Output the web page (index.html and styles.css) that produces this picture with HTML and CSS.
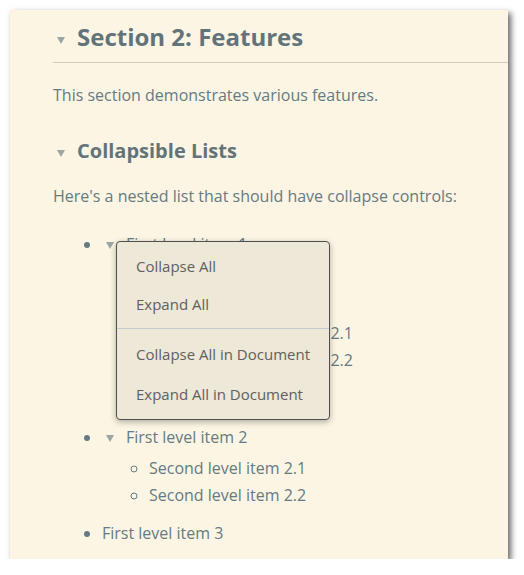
FILE: index.html
```html
<!DOCTYPE html>
<html>
<head>
<meta charset="utf-8">
<link rel="stylesheet" href="styles.css">
</head>
<body>
<div class="window">
  <div class="content">
    <h2 class="h2"><span class="tog"><span class="tri"></span></span>Section 2: Features</h2>
    <p class="para">This section demonstrates various features.</p>
    <h3 class="h3"><span class="tog"><span class="tri"></span></span>Collapsible Lists</h3>
    <p class="para">Here's a nested list that should have collapse controls:</p>
    <ul class="l1">
      <li><span class="tog"><span class="tri"></span></span>First level item 1
        <ul class="l2">
          <li>Second level item 1.1</li>
          <li><span class="tog"><span class="tri"></span></span>Second level item 1.2
            <ul class="l3">
              <li>Third level item 1.2.1</li>
              <li>Third level item 1.2.2</li>
            </ul>
          </li>
          <li>Second level item 1.3</li>
        </ul>
      </li>
      <li><span class="tog"><span class="tri"></span></span>First level item 2
        <ul class="l2">
          <li>Second level item 2.1</li>
          <li>Second level item 2.2</li>
        </ul>
      </li>
      <li>First level item 3</li>
    </ul>
  </div>
  <div class="menu">
    <div class="mi">Collapse All</div>
    <div class="mi">Expand All</div>
    <div class="sep"></div>
    <div class="mi">Collapse All in Document</div>
    <div class="mi mi-last">Expand All in Document</div>
  </div>
</div>
</body>
</html>
```
FILE: styles.css
```css
html, body {
  margin: 0;
  padding: 0;
  background: #ffffff;
}
body {
  font-family: "Open Sans", "Noto Sans", sans-serif;
}
.window {
  position: relative;
  margin: 10px 0 0 10px;
  width: 498px;
  height: 549px;
  background: #fcf5e3;
  box-shadow: 3px 3px 6px rgba(0, 0, 0, 0.6);
  overflow: hidden;
  color: #657b83;
}
.content {
  padding: 10px 0 0 43px;
}
.h2 {
  margin: 0;
  font-size: 24px;
  line-height: 34px;
  font-weight: 700;
  color: #627479;
  border-bottom: 1px solid #cfcdbf;
  padding-bottom: 8px;
  display: flex;
  align-items: center;
}
.h3 {
  margin: 0;
  font-size: 20px;
  line-height: 28px;
  font-weight: 700;
  color: #627479;
  display: flex;
  align-items: center;
  margin-top: 30px;
}
.tog {
  display: inline-flex;
  width: 24px;
  height: 10px;
  align-items: center;
  vertical-align: middle;
}
.tri {
  width: 0;
  height: 0;
  margin-left: 4px;
  border-left: 4px solid transparent;
  border-right: 4px solid transparent;
  border-top: 7px solid #9aa6a4;
}
.h2 .tog { margin-top: 6px; }
.h3 .tog { margin-top: 5px; }
.para {
  margin: 0;
  font-size: 16px;
  line-height: 24px;
}
.h2 + .para { margin-top: 20px; }
.h3 + .para { margin-top: 19px; }
.l1 {
  margin: 23px 0 0 0;
  padding-left: 49px;
  font-size: 16px;
  line-height: 27px;
  list-style: disc;
}
.l1 > li { margin-bottom: 11px; }
.l2 {
  margin: 4px 0 0 0;
  padding-left: 47px;
  list-style: circle;
}
.l3 {
  margin: 4px 0 12px 0;
  padding-left: 49px;
  list-style: square;
}
.menu {
  position: absolute;
  left: 106px;
  top: 231px;
  width: 212px;
  padding: 5px 0 6px 0;
  background: #ede8d7;
  border: 1px solid #4f4f4f;
  border-radius: 4px;
  box-shadow: 0 2px 6px rgba(0, 0, 0, 0.3);
  font-size: 15px;
  color: #5f6060;
}
.mi {
  height: 38px;
  line-height: 38px;
  padding-left: 19px;
}
.mi-last {
  margin-top: 2px;
}
.sep {
  height: 1px;
  background: #c6cbcf;
  margin: 5px 0 6px 0;
}
```
